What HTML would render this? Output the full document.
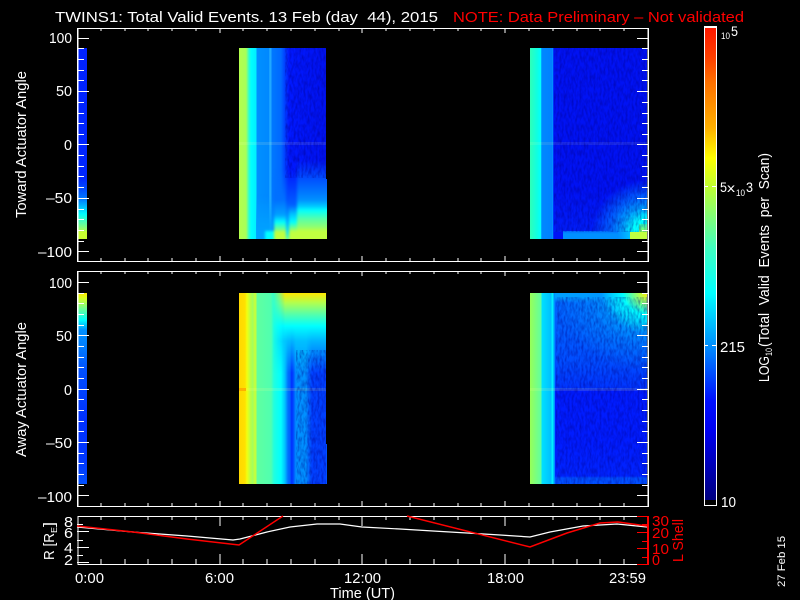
<!DOCTYPE html>
<html><head><meta charset="utf-8"><title>TWINS1</title>
<style>
html,body{margin:0;padding:0;background:#000}
#p{position:relative;width:800px;height:600px;overflow:hidden;background:#000}
#p i{position:absolute;display:block}
svg{position:absolute;left:0;top:0}
text{font-family:"Liberation Sans",sans-serif;fill:#fff;font-size:14.5px}
.r{fill:#f00}
</style></head><body><div id="p">

<!-- PANEL 1 -->
<i style="left:78px;top:48px;width:9px;height:191px;background:linear-gradient(#0022ff 0,#0026ff 130px,#0050ff 142px,#0080ff 152px,#00ffff 166px,#60ffa0 176px,#a0ff60 182px,#c8ff30 184px,#c8ff30 191px)"></i>

<i style="left:239px;top:48px;width:87px;height:191px;background:linear-gradient(90deg,#b4ff4c 0,#a8ff58 7px,#30ffd0 10px,#00ffff 12px,#00f0ff 17px,#0090ff 18px,#0088ff 30px,#20a8ff 30.5px,#20a8ff 32px,#0078ff 33px,#0068ff 42px,#0048ff 45px,#0018ff 50px,#0012f0 87px)"></i>

<!-- lower hill of block 2, panel 1 -->
<i style="left:256px;top:140px;width:70px;height:99px;overflow:hidden">
  <i style="left:-4px;top:-4px;width:82px;height:115px;filter:blur(1.2px)">
    <i style="left:2px;top:60px;width:19px;height:55px;background:linear-gradient(rgba(0,150,255,0) 0,rgba(0,160,255,.9) 29px,rgba(0,170,255,1) 100%)"></i>
    <i style="left:13px;top:95px;width:9px;height:20px;background:#00ffff"></i>
    <i style="left:22px;top:34px;width:12px;height:81px;background:linear-gradient(rgba(0,70,255,0) 0,#0070ff 30px,#00a0ff 45px,#00ffff 52px,#80ff80 60px,#c0ff40 62px,#c0ff40 81px)"></i>
    <i style="left:34px;top:34px;width:3px;height:81px;background:linear-gradient(rgba(0,70,255,0) 0,#0050ff 30px,#00a0ff 50px,#00e0ff 62px,#60ffa0 69px,#60ffa0 81px)"></i>
    <i style="left:37px;top:34px;width:8px;height:81px;background:linear-gradient(rgba(0,70,255,0) 0,#0060ff 35px,#00c0ff 44px,#00ffff 52px,#c0ff40 62px,#c0ff40 81px)"></i>
    <i style="left:45px;top:24px;width:37px;height:91px;background:linear-gradient(rgba(0,60,255,0) 0,#0050ff 19px,#0070ff 30px,#0090ff 40px,#00d0ff 47px,#00ffff 50px,#60ffa0 60px,#90ff70 67px,#c0ff40 71px,#c0ff40 91px)"></i>
  </i>
</i>
<i style="left:326px;top:179px;width:1px;height:60px;background:linear-gradient(#0050ff 0,#0070ff 11px,#0090ff 21px,#00d0ff 28px,#00ffff 31px,#60ffa0 41px,#90ff70 48px,#c0ff40 52px,#c0ff40 60px)"></i>

<i style="left:530px;top:48px;width:117px;height:191px;background:linear-gradient(90deg,#30ffb8 0,#10ffe0 7px,#00ffff 11px,#0088ff 11.5px,#0080ff 22px,#0090ff 22.3px,#0090ff 23px,#0012f4 23.5px,#0012f4 117px)"></i>
<i style="left:553px;top:190px;width:94px;height:42px;background:linear-gradient(rgba(0,50,255,0),rgba(0,50,255,.35))"></i>
<i style="left:590px;top:175px;width:57px;height:57px;background:radial-gradient(ellipse 55px 52px at 100% 100%,#00ffff 0,#00ffff 26%,#00a0ff 46%,#0060ff 68%,rgba(0,60,255,0) 100%)"></i>
<i style="left:639px;top:224px;width:8px;height:8px;background:linear-gradient(#30ffc0,#90ff60)"></i>
<i style="left:563px;top:231px;width:67px;height:8px;background:linear-gradient(#0070ff,#0090ff 3px)"></i>
<i style="left:618px;top:231px;width:12px;height:8px;background:linear-gradient(90deg,#0090ff,#00c0ff)"></i>
<i style="left:630px;top:232px;width:17px;height:7px;background:#c0ff40"></i>

<!-- PANEL 2 -->
<i style="left:78px;top:293px;width:9px;height:191px;background:linear-gradient(#ffe800 0,#d8ff20 5px,#c0ff40 8px,#60ffa0 17px,#00ffff 27px,#0090ff 37px,#0080ff 52px,#0050ff 77px,#0030ff 127px,#0038ff 170px,#0050ff 191px)"></i>

<i style="left:239px;top:293px;width:87px;height:191px;background:linear-gradient(90deg,#ffd800 0,#ffe000 6px,#f0ff10 8px,#c0ff40 11px,#a0ff60 14px,#c0ff40 15px,#c0ff40 17px,#60ffa0 18px,#50ffb0 32px,#20ffe0 35px,#00ffff 42px,#00c0ff 46px,#0070ff 49px,#0060ff 51px,#0030ff 52.5px,#0040ff 54px,#0090ff 57px,#0090ff 67px,#0070ff 69px,#0040ff 73px,#0040ff 87px)"></i>
<i style="left:272px;top:293px;width:54px;height:80px;-webkit-mask-image:linear-gradient(90deg,transparent 0,#000 13px);mask-image:linear-gradient(90deg,transparent 0,#000 13px);background:linear-gradient(#ffe800 0,#b0ff50 10px,#50ffb0 22px,#00ffff 33px,rgba(0,200,255,.85) 48px,rgba(0,120,255,0) 80px)"></i>
<i style="left:326px;top:444px;width:1px;height:40px;background:#0050ff"></i>
<i style="left:239px;top:388px;width:87px;height:3px;background:rgba(255,255,140,.14)"></i>
<i style="left:239px;top:388px;width:7px;height:3px;background:#ffb000"></i>

<i style="left:530px;top:293px;width:117px;height:191px;background:linear-gradient(90deg,#98ff58 0,#60ffa0 11px,#00e0ff 12px,#00c0ff 21px,#00f0ff 22px,#00f0ff 23px,#0090ff 24px,#0090ff 25px,rgba(0,90,255,0) 26px)"></i>
<i style="left:555px;top:293px;width:92px;height:191px;background:linear-gradient(#00a0ff 0,#00a0ff 4px,#0064ff 10px,#005cff 40px,#004cff 70px,#0034ff 96px,#001cff 97px,#001cff 150px,#0024ff 183px,#0050ff 185px,#0050ff 191px)"></i>
<i style="left:555px;top:293px;width:92px;height:80px;background:radial-gradient(ellipse 92px 78px at 100% 0,rgba(0,170,255,.95) 0,rgba(0,150,255,.6) 55%,rgba(0,120,255,0) 100%)"></i>
<i style="left:590px;top:293px;width:57px;height:70px;background:radial-gradient(ellipse 57px 50px at 100% 0,#ffe800 0,#b0ff50 14%,#00ffff 42%,#00d0ff 62%,rgba(0,150,255,.55) 80%,rgba(0,130,255,0) 100%)"></i>

<!-- bands at zero -->
<i style="left:239px;top:142px;width:87px;height:3px;background:rgba(255,255,200,.12)"></i>
<i style="left:530px;top:142px;width:117px;height:3px;background:rgba(255,255,180,.10)"></i>
<i style="left:530px;top:388px;width:117px;height:3px;background:rgba(255,255,140,.14)"></i>

<!-- COLOR BAR -->
<i style="left:705px;top:28px;width:11px;height:472px;background:linear-gradient(#ff1800 0,#ff4000 30px,#ff7000 54px,#ffb000 100px,#ffff00 130px,#c0ff30 158px,#40ffc0 220px,#00ffff 265px,#0090ff 317px,#0010ff 372px,#0000f0 402px,#0000c0 432px,#000080 472px)"></i>

<svg width="800" height="600" viewBox="0 0 800 600">
<defs>
<filter id="n" x="0" y="0" width="100%" height="100%"><feTurbulence type="fractalNoise" baseFrequency=".5 .16" numOctaves="2" seed="4"/><feColorMatrix values="0 0 0 0 0 0 0 0 0 0 0 0 0 0 .25 0 0 0 1.7 -.62"/></filter>
<path id="xm" d="M101 0v3M125 0v3M148 0v3M172 0v3M196 0v3M243 0v3M267 0v3M291 0v3M315 0v3M339 0v3M386 0v3M410 0v3M434 0v3M458 0v3M481 0v3M529 0v3M553 0v3M577 0v3M600 0v3M624 0v3"/>
<path id="xM" d="M220 0v5M362 0v5M505 0v5"/>
</defs>

<g opacity=".55">
<rect x="554" y="48" width="93" height="184" filter="url(#n)"/>
<rect x="556" y="297" width="91" height="187" filter="url(#n)"/>
<rect x="285" y="48" width="41" height="130" filter="url(#n)"/>
<rect x="296" y="350" width="30" height="134" filter="url(#n)"/>
</g>

<g fill="none" stroke="#fff" stroke-width="1" shape-rendering="crispEdges">
<!-- frames -->
<path d="M77.5 28.5H648.5V261.5H77.5Z"/>
<path d="M77.5 271.5H648.5V506.5H77.5Z"/>
<path d="M78 28V261M78 271V506M78 516V564M648 28V261M648 271V506" stroke-width="1.4"/>
<path d="M77.5 516.5H637M77.5 564.5H637"/>
<path d="M704.5 26.5H716.5V505.5H704.5Z"/>
<path d="M705 27H716" stroke-width="2"/>
<path d="M705 186.5h3M712 186.5h4M705 345.5h3M712 345.5h4"/>

<use href="#xm" transform="translate(0,28)"/><use href="#xM" transform="translate(0,28)"/>
<use href="#xm" transform="translate(0,261) scale(1,-1)"/><use href="#xM" transform="translate(0,261) scale(1,-1)"/>
<use href="#xm" transform="translate(0,271)"/><use href="#xM" transform="translate(0,271)"/>
<use href="#xm" transform="translate(0,506) scale(1,-1)"/><use href="#xM" transform="translate(0,506) scale(1,-1)"/>
<path d="M101 516v4M125 516v4M148 516v4M172 516v4M196 516v4M243 516v4M267 516v4M291 516v4M315 516v4M339 516v4M386 516v4M410 516v4M434 516v4M458 516v4M481 516v4M529 516v4M553 516v4M577 516v4M600 516v4M624 516v4M220 516v10M362 516v10M505 516v10"/>
<path d="M101 564v-5M125 564v-5M148 564v-5M172 564v-5M196 564v-5M243 564v-5M267 564v-5M291 564v-5M315 564v-5M339 564v-5M386 564v-5M410 564v-5M434 564v-5M458 564v-5M481 564v-5M529 564v-5M553 564v-5M577 564v-5M600 564v-5M624 564v-5M220 564v-10M362 564v-10M505 564v-10"/>

<!-- panel 1 y ticks -->
<path d="M77 38.5h12M77 91.5h12M77 144.5h12M77 198.5h12M77 251.5h12M77 48.5h7M77 59.5h7M77 70.5h7M77 80.5h7M77 102.5h7M77 113.5h7M77 123.5h7M77 134.5h7M77 155.5h7M77 166.5h7M77 176.5h7M77 187.5h7M77 209.5h7M77 219.5h7M77 230.5h7M77 241.5h7"/>
<path d="M648 38.5h-11M648 91.5h-11M648 144.5h-11M648 198.5h-11M648 251.5h-11M648 48.5h-6M648 59.5h-6M648 70.5h-6M648 80.5h-6M648 102.5h-6M648 113.5h-6M648 123.5h-6M648 134.5h-6M648 155.5h-6M648 166.5h-6M648 176.5h-6M648 187.5h-6M648 209.5h-6M648 219.5h-6M648 230.5h-6M648 241.5h-6"/>
<!-- panel 2 y ticks -->
<path d="M77 282.5h12M77 335.5h12M77 389.5h12M77 442.5h12M77 495.5h12M77 293.5h7M77 303.5h7M77 314.5h7M77 325.5h7M77 346.5h7M77 357.5h7M77 367.5h7M77 378.5h7M77 399.5h7M77 410.5h7M77 421.5h7M77 431.5h7M77 453.5h7M77 463.5h7M77 474.5h7M77 485.5h7"/>
<path d="M648 282.5h-11M648 335.5h-11M648 389.5h-11M648 442.5h-11M648 495.5h-11M648 293.5h-6M648 303.5h-6M648 314.5h-6M648 325.5h-6M648 346.5h-6M648 357.5h-6M648 367.5h-6M648 378.5h-6M648 399.5h-6M648 410.5h-6M648 421.5h-6M648 431.5h-6M648 453.5h-6M648 463.5h-6M648 474.5h-6M648 485.5h-6"/>
<!-- panel 3 left ticks -->
<path d="M77 531.5h12M77 547.5h12M77 562.5h12M77 524.5h6M77 540.5h6M77 555.5h6"/>
</g>

<!-- panel 3 right axis -->
<g fill="none" stroke="#f00" shape-rendering="crispEdges">
<path d="M648 516V565" stroke-width="2"/>
<path d="M637 516.5h11M637 532.5h11M637 548.5h11M637 564.5h11M642 524.5h6M642 541.5h6M642 557.5h6"/>
</g>

<!-- traces -->
<polyline fill="none" stroke="#fff" stroke-width="1.2" points="77,527 133,532 187,536 233,540 240,539 267,532 290,527 317,524 340,524 362,527 400,529 433,531 467,533 500,535 530,537 550,532 583,526 617,524 647,527"/>
<polyline fill="none" stroke="#f00" stroke-width="1.5" points="77,526 133,532 187,539 239,545 283,516"/>
<polyline fill="none" stroke="#f00" stroke-width="1.5" points="407,516 530,547 567,533 600,523 618,522 647,526"/>

<!-- title -->
<text x="55" y="22" style="font-size:15px" textLength="383" lengthAdjust="spacingAndGlyphs" xml:space="preserve">TWINS1: Total Valid Events. 13 Feb (day  44), 2015</text>
<text class="r" x="453" y="22" style="font-size:15px" textLength="291" lengthAdjust="spacingAndGlyphs">NOTE: Data Preliminary – Not validated</text>

<!-- panel 1 labels -->
<text x="49" y="43" textLength="23" lengthAdjust="spacingAndGlyphs">100</text>
<text x="56" y="96" textLength="16" lengthAdjust="spacingAndGlyphs">50</text>
<text x="64" y="150" textLength="8" lengthAdjust="spacingAndGlyphs">0</text>
<text x="46" y="203" textLength="26" lengthAdjust="spacingAndGlyphs">–50</text>
<text x="38" y="257" textLength="34" lengthAdjust="spacingAndGlyphs">–100</text>
<!-- panel 2 labels -->
<text x="49" y="288" textLength="23" lengthAdjust="spacingAndGlyphs">100</text>
<text x="56" y="341" textLength="16" lengthAdjust="spacingAndGlyphs">50</text>
<text x="64" y="395" textLength="8" lengthAdjust="spacingAndGlyphs">0</text>
<text x="46" y="448" textLength="26" lengthAdjust="spacingAndGlyphs">–50</text>
<text x="38" y="502" textLength="34" lengthAdjust="spacingAndGlyphs">–100</text>
<!-- panel 3 labels -->
<text x="64" y="527" textLength="9" lengthAdjust="spacingAndGlyphs">8</text>
<text x="64" y="538" textLength="9" lengthAdjust="spacingAndGlyphs">6</text>
<text x="64" y="553" textLength="9" lengthAdjust="spacingAndGlyphs">4</text>
<text x="64" y="565" textLength="9" lengthAdjust="spacingAndGlyphs">2</text>
<text class="r" x="652" y="526" textLength="17" lengthAdjust="spacingAndGlyphs">30</text>
<text class="r" x="652" y="538" textLength="17" lengthAdjust="spacingAndGlyphs">20</text>
<text class="r" x="652" y="554" textLength="17" lengthAdjust="spacingAndGlyphs">10</text>
<text class="r" x="652" y="565" textLength="8" lengthAdjust="spacingAndGlyphs">0</text>

<!-- x labels -->
<text x="75" y="583" textLength="29" lengthAdjust="spacingAndGlyphs">0:00</text>
<text x="205" y="583" textLength="29" lengthAdjust="spacingAndGlyphs">6:00</text>
<text x="344" y="583" textLength="37" lengthAdjust="spacingAndGlyphs">12:00</text>
<text x="487" y="583" textLength="37" lengthAdjust="spacingAndGlyphs">18:00</text>
<text x="609" y="583" textLength="37" lengthAdjust="spacingAndGlyphs">23:59</text>
<text x="330" y="598" textLength="65" lengthAdjust="spacingAndGlyphs" xml:space="preserve">Time (UT)</text>

<!-- rotated labels -->
<text transform="translate(26,218) rotate(-90)" textLength="147" lengthAdjust="spacingAndGlyphs">Toward Actuator Angle</text>
<text transform="translate(26,457) rotate(-90)" textLength="135" lengthAdjust="spacingAndGlyphs">Away Actuator Angle</text>
<text transform="translate(54,560) rotate(-90)" textLength="27" lengthAdjust="spacingAndGlyphs">R [R</text>
<text transform="translate(57,533) rotate(-90)" style="font-size:8px" textLength="6" lengthAdjust="spacingAndGlyphs">E</text>
<text transform="translate(54,527) rotate(-90)" textLength="5" lengthAdjust="spacingAndGlyphs">]</text>
<text class="r" transform="translate(683,562) rotate(-90)" textLength="43" lengthAdjust="spacingAndGlyphs">L Shell</text>
<text transform="translate(785,587) rotate(-90)" style="font-size:11px" textLength="51" lengthAdjust="spacingAndGlyphs">27 Feb 15</text>
<text transform="translate(769,382) rotate(-90)" style="font-size:15px" textLength="26" lengthAdjust="spacingAndGlyphs">LOG</text>
<text transform="translate(772,356) rotate(-90)" style="font-size:9px" textLength="8" lengthAdjust="spacingAndGlyphs">10</text>
<text transform="translate(769,347) rotate(-90)" style="font-size:15px" textLength="194" lengthAdjust="spacingAndGlyphs" xml:space="preserve">(Total  Valid  Events  per  Scan)</text>

<!-- colour bar labels -->
<text x="721" y="39" style="font-size:9px" textLength="9" lengthAdjust="spacingAndGlyphs">10</text>
<text x="731" y="36" style="font-size:14px" textLength="7" lengthAdjust="spacingAndGlyphs">5</text>
<text x="720" y="192" style="font-size:14px" textLength="7" lengthAdjust="spacingAndGlyphs">5</text>
<text x="727" y="192" style="font-size:12px" textLength="8" lengthAdjust="spacingAndGlyphs">x</text>
<text x="736" y="196" style="font-size:9px" textLength="9" lengthAdjust="spacingAndGlyphs">10</text>
<text x="746" y="192" style="font-size:14px" textLength="7" lengthAdjust="spacingAndGlyphs">3</text>
<text x="720" y="352" textLength="25" lengthAdjust="spacingAndGlyphs">215</text>
<text x="721" y="507" textLength="15" lengthAdjust="spacingAndGlyphs">10</text>
</svg>
</div></body></html>
